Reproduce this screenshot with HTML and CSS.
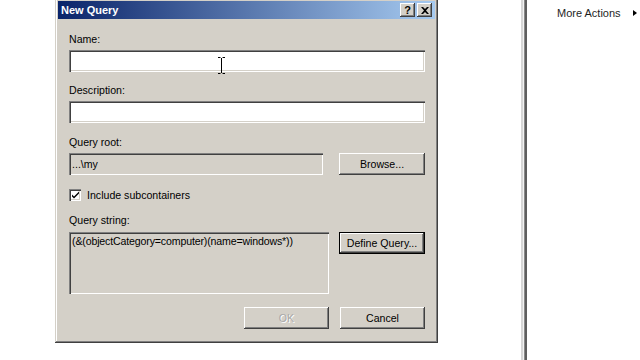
FILE: index.html
```html
<!DOCTYPE html>
<html lang="en">
<head>
  <meta charset="UTF-8" />
  <title>New Query</title>
  <link rel="stylesheet" href="styles.css">
</head>
<body>

  <div class="dialog">
    <div class="titlebar">
      <span class="title">New Query</span>
      <div class="caption-btns">
        <span class="cap-btn help">?</span>
        <span class="cap-btn close">
          <svg width="8" height="7" viewBox="0 0 8 7"><path d="M0 0h2l2 2 2-2h2L5 3.5 8 7H6L4 5 2 7H0l3-3.5z" fill="#000"/></svg>
        </span>
      </div>
    </div>

    <div class="content">
      <div class="label first">Name:</div>
      <div class="field name-field">
        <svg class="ibeam" width="7" height="17" viewBox="0 0 7 17"><path d="M0 .5h2.5M4.5 .5H7M3.5 1v15M0 16.5h2.5M4.5 16.5H7" stroke="#000" stroke-width="1" fill="none"/></svg>
      </div>

      <div class="label">Description:</div>
      <div class="field"></div>

      <div class="label gap">Query root:</div>
      <div class="row">
        <div class="field disabled root">...\my</div>
        <button class="btn">Browse...</button>
      </div>

      <div class="check-row">
        <span class="checkbox">
          <svg width="9" height="9" viewBox="0 0 9 9"><path d="M1 3.5l2 2 5-5v2l-5 5-2-2z" fill="#000"/></svg>
        </span>
        <span>Include subcontainers</span>
      </div>

      <div class="label">Query string:</div>
      <div class="row query">
        <div class="field disabled query-text">(&amp;(objectCategory=computer)(name=windows*))</div>
        <button class="btn default">Define Query...</button>
      </div>

      <div class="footer-btns">
        <button class="btn off">OK</button>
        <button class="btn">Cancel</button>
      </div>
    </div>
  </div>

  <div class="split"></div>

  <div class="actions">
    <span>More Actions</span>
    <span class="arrow"></span>
  </div>

</body>
</html>
```

FILE: styles.css
```css
* { box-sizing: border-box; }
body {
  margin: 0;
  background: #fff;
  display: flex;
  height: 360px;
  overflow: hidden;
  font-family: 'Liberation Sans', Arial, sans-serif;
  font-size: 10.6px;
  color: #000;
}

.dialog {
  margin: -2px 0 0 55px;
  width: 383px;
  height: 345px;
  flex: none;
  background: #d4d0c8;
  padding: 3px;
  box-shadow: inset -1px -1px #404040, inset 1px 1px #d4d0c8,
              inset -2px -2px #808080, inset 2px 2px #fff;
}
.titlebar {
  height: 18px;
  display: flex;
  align-items: center;
  justify-content: space-between;
  padding: 0 3px 0 3px;
  background: linear-gradient(to right, #0a246a, #a6caf0);
}
.title {
  color: #fff;
  font-weight: bold;
  font-size: 11px;
}
.caption-btns { display: flex; gap: 2px; }
.cap-btn {
  width: 15px;
  height: 14px;
  background: #d4d0c8;
  display: flex;
  align-items: center;
  justify-content: center;
  font-weight: bold;
  font-size: 11px;
  line-height: 1;
  box-shadow: inset -1px -1px #404040, inset 1px 1px #fff,
              inset -2px -2px #808080;
}

.content { padding: 0 10px 0 11px; }
.label { margin-top: 12px; line-height: 13px; }
.label.first { margin-top: 14px; }
.label.gap { margin-top: 13px; }

.field {
  position: relative;
  margin-top: 4px;
  height: 22px;
  background: #fff;
  padding: 0 3px;
  line-height: 22px;
  box-shadow: inset 1px 1px #808080, inset 2px 2px #404040,
              inset -1px -1px #fff, inset -2px -2px #d4d0c8;
}
.field.disabled { background: #d4d0c8; }
.ibeam { position: absolute; left: 149px; top: 7px; }

.row {
  display: flex;
  justify-content: space-between;
  align-items: flex-start;
  margin-top: 4px;
}
.row .field { margin-top: 0; }
.root { width: 254px; }
.row.query { margin-top: 5px; }
.query-text {
  width: 260px;
  height: 62px;
  line-height: 13px;
  padding-top: 3px;
  letter-spacing: -0.15px;
}

.btn {
  width: 86px;
  height: 22px;
  border: none;
  padding: 0;
  background: #d4d0c8;
  font: inherit;
  color: #000;
  box-shadow: inset -1px -1px #404040, inset 1px 1px #fff,
              inset -2px -2px #808080, inset 2px 2px #d4d0c8;
}
.btn.default {
  box-shadow: inset 0 0 0 1px #000, inset -2px -2px #404040,
              inset 2px 2px #fff, inset -3px -3px #808080;
}
.btn.off {
  color: #a8a8a8;
  text-shadow: 1px 1px #fff;
}

.check-row {
  display: flex;
  align-items: center;
  gap: 6px;
  margin-top: 13px;
  height: 14px;
}
.checkbox {
  width: 12px;
  height: 12px;
  background: #fff;
  display: flex;
  align-items: center;
  justify-content: center;
  box-shadow: inset 1px 1px #808080, inset 2px 2px #404040,
              inset -1px -1px #fff, inset -2px -2px #d4d0c8;
}

.footer-btns {
  display: flex;
  justify-content: flex-end;
  gap: 11px;
  margin-top: 13px;
}
.footer-btns .btn { width: 85px; }

.split {
  margin-left: 83px;
  width: 6px;
  height: 360px;
  flex: none;
  background: linear-gradient(to right, #d6d6d6 0 2px, #f2f2f2 2px 3px, #8a8a8a 3px 4px, #5e5e5e 4px 6px);
}

.actions {
  flex: 1;
  display: flex;
  justify-content: space-between;
  align-items: flex-start;
  padding: 7px 3px 0 30px;
  font-size: 11px;
  color: #1e1e1e;
}
.arrow {
  margin-top: 3px;
  width: 0;
  height: 0;
  border-top: 3.5px solid transparent;
  border-bottom: 3.5px solid transparent;
  border-left: 4px solid #000;
}
```
